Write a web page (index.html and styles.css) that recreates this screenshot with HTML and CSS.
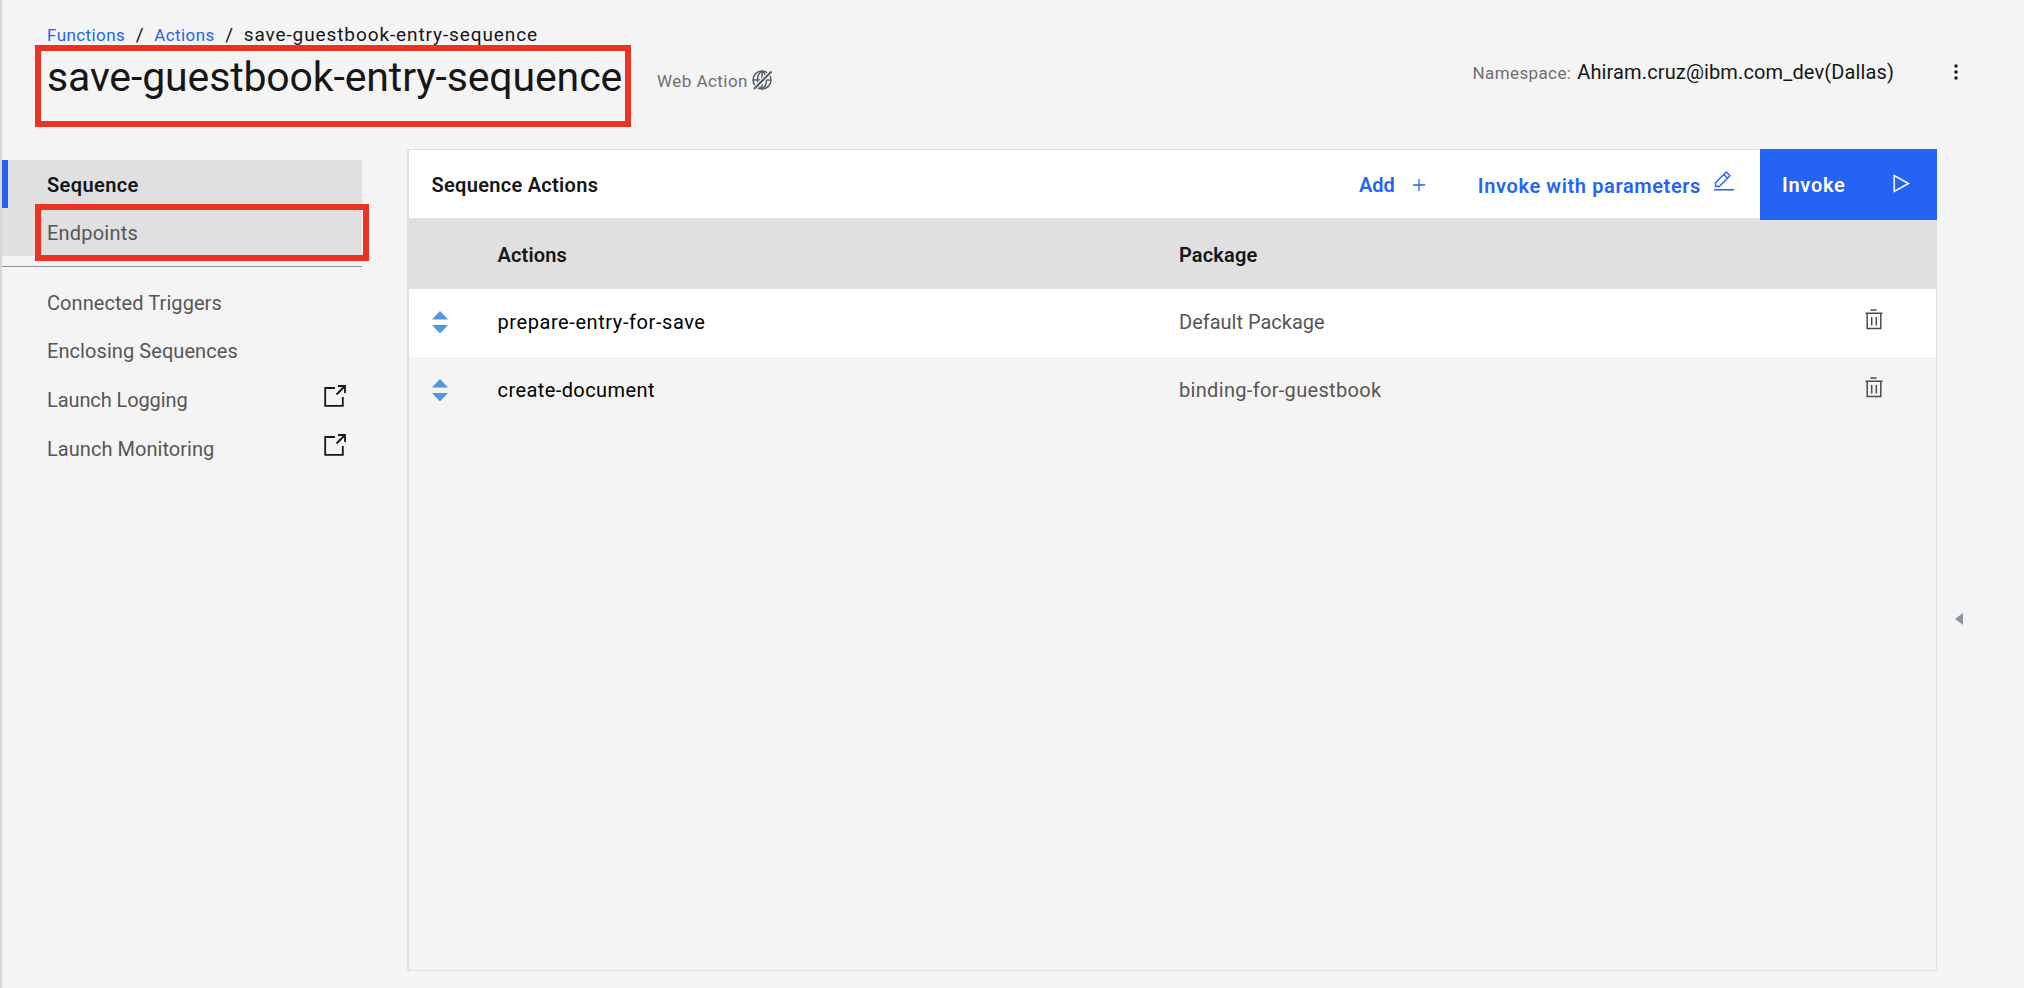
FILE: index.html
```html
<!DOCTYPE html>
<html lang="en">
<head>
<meta charset="utf-8">
<title>save-guestbook-entry-sequence</title>
<link rel="stylesheet" href="styles.css">
</head>
<body>
<svg width="0" height="0" class="sprite" aria-hidden="true">
  <symbol id="launch" viewBox="0 0 22 22"><path d="M11 3H1.200v17.800h17.600V12M14 1h7v7M21 1l-8.500 8.500" fill="none" stroke="currentColor" stroke-width="1.800"/></symbol>
  <symbol id="sort" viewBox="0 0 16 22"><path d="M8 0l8 8.500H0zM0 14h16l-8 8.500z" fill="currentColor"/></symbol>
  <symbol id="trash" viewBox="0 0 18 21"><path d="M5.500 1h6M.5 4.200h17M2.200 4.500v15h13.600v-15M6.700 8v8.500M11.300 8v8.500" fill="none" stroke="currentColor" stroke-width="1.500"/></symbol>
</svg>
<header class="header">
  <div class="heading">
    <nav class="crumbs"><a>Functions</a><i>/</i><a>Actions</a><i>/</i><span class="here">save-guestbook-entry-sequence</span></nav>
    <div class="title-row">
      <div class="marked"><h1>save-guestbook-entry-sequence</h1><div class="mark mark-title"></div></div>
      <div class="web"><span>Web Action</span>
        <svg width="20" height="20" viewBox="0 0 20 20" fill="none" stroke="#525f68" stroke-width="1.500"><circle cx="10" cy="10" r="9"/><path d="M10 1v18M1 10h18M10 1C4 5 4 15 10 19M10 1c6 4 6 14 0 18"/><path d="M2 19L19 2" stroke="#f2f4f7" stroke-width="4.500"/><path d="M2 19L19.500 1.500" stroke-width="2"/></svg>
      </div>
    </div>
  </div>
  <div class="namespace"><span class="ns-label">Namespace:</span><span class="ns-value">Ahiram.cruz@ibm.com_dev(Dallas)</span>
    <svg width="4" height="16" viewBox="0 0 4 16" fill="#161616"><circle cx="2" cy="2" r="1.700"/><circle cx="2" cy="8" r="1.700"/><circle cx="2" cy="14" r="1.700"/></svg>
  </div>
</header>
<main class="main">
  <aside class="side">
    <div class="group">
      <div class="item current"><span>Sequence</span></div>
      <div class="item endpoints"><span>Endpoints</span><div class="mark mark-item"></div></div>
    </div>
    <hr>
    <div class="item"><span>Connected Triggers</span></div>
    <div class="item"><span>Enclosing Sequences</span></div>
    <div class="item launch"><span>Launch Logging</span><svg width="22" height="22"><use href="#launch"/></svg></div>
    <div class="item launch monitoring"><span>Launch Monitoring</span><svg width="22" height="22"><use href="#launch"/></svg></div>
  </aside>
  <section class="panel">
    <div class="toolbar">
      <h2>Sequence Actions</h2>
      <div class="add"><span>Add</span><svg width="12" height="12" viewBox="0 0 12 12"><path d="M6 0v12M0 6h12" stroke="currentColor" stroke-width="1.300"/></svg></div>
      <div class="params"><span>Invoke with parameters</span><svg width="20" height="20" viewBox="0 0 20 20" fill="none" stroke="currentColor" stroke-width="1.400"><path d="M0 18.700h20M1.500 15.500v-3.800L12.300 1l3.700 3.700L5.300 15.500zM9.800 3.600l3.700 3.700"/></svg></div>
      <div class="invoke"><span>Invoke</span><svg width="17" height="19" viewBox="0 0 17 19"><path d="M1.200 1.500v16L15.500 9.500z" fill="none" stroke="currentColor" stroke-width="1.500"/></svg></div>
    </div>
    <div class="row head"><span></span><div>Actions</div><div>Package</div></div>
    <div class="row white"><svg width="16" height="23"><use href="#sort" width="16" height="22"/></svg><div class="name">prepare-entry-for-save</div><div class="pkg">Default Package</div><svg class="trash" width="18" height="21"><use href="#trash"/></svg></div>
    <div class="row"><svg width="16" height="23"><use href="#sort" width="16" height="22"/></svg><div class="name doc">create-document</div><div class="pkg binding">binding-for-guestbook</div><svg class="trash" width="18" height="21"><use href="#trash"/></svg></div>
  </section>
  <div class="collapse"><svg width="8" height="12" viewBox="0 0 8 12"><path d="M8 0v12L0 6z" fill="#8897a2"/></svg></div>
</main>
</body>
</html>
```
FILE: styles.css
```css
* { box-sizing: border-box; }
body { margin: 0; height: 988px; overflow: hidden; background: #f4f4f4; border-left: 2px solid #d8d8d8; color: #161616; font: 20px/24px Roboto, "Liberation Sans", sans-serif; }
span, a { white-space: nowrap; }
svg { display: block; flex: none; }
.sprite { position: absolute; }
h1, h2 { margin: 0; font-weight: 400; font-size: inherit; }

.header { display: flex; justify-content: space-between; height: 149px; padding: 23px 66px 0 45px; }
.crumbs { display: flex; align-items: baseline; height: 24px; font-size: 19px; }
.crumbs a { color: #2563eb; font-size: 17px; letter-spacing: 0.42px; }
.crumbs i { font-style: normal; width: 29px; text-align: center; }
.here { letter-spacing: 0.9px; }
.title-row { display: flex; margin-top: 2px; }
h1 { width: 576px; font-size: 41px; line-height: 56px; letter-spacing: -0.13px; white-space: nowrap; }
.marked, .item { position: relative; }
.mark { position: absolute; border: 6px solid #eb3223; }
.mark-title { left: -12px; top: -4px; width: 596px; height: 82px; }
.web { display: flex; gap: 4px; padding-top: 20px; margin-left: 34px; color: #6f6f6f; font-size: 17px; letter-spacing: 0.45px; }
.web svg { margin-top: 1px; }
.namespace { display: flex; align-items: baseline; padding-top: 37px; height: 61px; }
.ns-label { font-size: 17px; color: #6f6f6f; margin-right: 6px; letter-spacing: 0.38px; }
.ns-value { letter-spacing: 0.13px; }
.namespace svg { align-self: flex-start; margin: 4px 0 0 60px; }

.main { display: flex; }
.side { width: 360px; padding-top: 11px; }
.group { background: #e0e0e0; }
.item { display: flex; justify-content: space-between; height: 48px; padding: 12px 16px 12px 45px; color: #565656; letter-spacing: 0.07px; }
.current { padding-top: 13px; color: #161616; font-weight: 600; letter-spacing: 0.4px; border-left: 6px solid #2563eb; padding-left: 39px; }
.endpoints { padding-top: 13px; letter-spacing: 0.2px; }
.mark-item { left: 33px; top: -4px; width: 334px; height: 57px; }
.side hr { margin: 10px 0 12px; border: 0; height: 1px; background: #8d8d8d; }
.launch { height: 49px; padding-top: 13px; letter-spacing: -0.1px; }
.monitoring { letter-spacing: 0.04px; }
.launch svg { margin-top: -3px; color: #161616; }

.panel { width: 1530px; height: 822px; margin-left: 45px; border: 1px solid #dde1e5; border-left-width: 2px; }
.toolbar { display: flex; height: 68px; line-height: 70px; background: #fff; color: #2563f4; font-weight: 600; }
h2 { flex: 1; padding-left: 22.5px; color: #161616; font-weight: 600; letter-spacing: 0.3px; }
.add, .params, .invoke { display: flex; }
.add svg { margin: 29px 53px 0 18px; }
.params { line-height: 72px; letter-spacing: 0.61px; }
.params svg { margin: 21px 26px 0 13px; }
.invoke { height: 71px; width: 177px; margin: -1px -1px 0 0; padding: 1px 27px 0 22px; justify-content: space-between; background: #2563f4; color: #fff; letter-spacing: 0.7px; }
.invoke svg { margin-top: 24px; }
.row { display: grid; grid-template-columns: 65.5px 681.5px 1fr 18px; height: 68px; padding: 0 53px 0 23px; line-height: 66px; }
.row > svg { margin-top: 22px; color: #4f98dd; }
.row > .trash { margin-top: 20px; color: #4c4c4c; }
.head { height: 71px; line-height: 74px; background: #e0e0e0; font-weight: 600; letter-spacing: 0.15px; }
.white { background: #fff; line-height: 67px; }
.name { color: #000; letter-spacing: 0.58px; }
.doc { letter-spacing: 0.42px; }
.pkg { color: #565656; }
.binding { letter-spacing: 0.32px; }
.collapse { padding: 464px 0 0 18px; }
```
